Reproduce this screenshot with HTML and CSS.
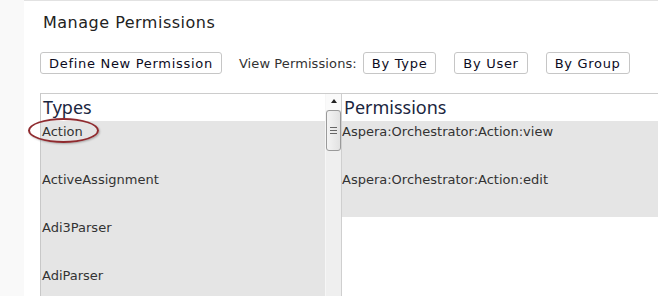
FILE: index.html
```html
<!DOCTYPE html>
<html lang="en">
<head>
  <meta charset="UTF-8">
  <title>Manage Permissions</title>
  <link rel="stylesheet" href="styles.css">
</head>
<body>
  <div class="page">
    <h1 class="page-title">Manage Permissions</h1>

    <div class="toolbar">
      <button class="btn">Define New Permission</button>
      <span class="toolbar-label">View Permissions:</span>
      <button class="btn">By Type</button>
      <button class="btn btn-spaced">By User</button>
      <button class="btn btn-spaced">By Group</button>
    </div>

    <div class="panel">
      <div class="col col-types">
        <div class="col-head">Types</div>
        <div class="col-list">
          <div class="row">Action</div>
          <div class="row">ActiveAssignment</div>
          <div class="row">Adi3Parser</div>
          <div class="row">AdiParser</div>
        </div>
      </div>

      <div class="scrollbar">
        <div class="scroll-up"></div>
        <div class="scroll-thumb"><span class="grip"></span></div>
      </div>

      <div class="col col-perms">
        <div class="col-head">Permissions</div>
        <div class="col-list">
          <div class="row">Aspera:Orchestrator:Action:view</div>
          <div class="row">Aspera:Orchestrator:Action:edit</div>
        </div>
      </div>

      <span class="callout"></span>
    </div>
  </div>
</body>
</html>
```

FILE: styles.css
```css
:root {
  --border: #cccccc;
  --row-bg: #e5e5e5;
  --text: #333333;
  --font: 'DejaVu Sans', Verdana, sans-serif;
}
* { box-sizing: border-box; margin: 0; padding: 0; }
html, body { height: 100%; overflow: hidden; }
body { background: #f9f9f9; font-family: var(--font); color: var(--text); }

.page {
  margin-left: 24px;
  height: 100%;
  background: #fff;
  border-top: 1px solid #e2e2e2;
  padding-left: 16px;
  display: flex;
  flex-direction: column;
}

/* Title */
.page-title {
  font-size: 16px;
  font-weight: normal;
  letter-spacing: 0.5px;
  line-height: 20px;
  color: #222;
  padding: 12px 0 0 3px;
}

/* Toolbar */
.toolbar {
  display: flex;
  align-items: center;
  margin-top: 19px;
  font-size: 13px;
}
.btn {
  font-family: var(--font);
  font-size: 13px;
  letter-spacing: 0.7px;
  color: #0c0c1e;
  background: #fff;
  border: 1px solid #c6c6c6;
  border-radius: 3px;
  height: 22px;
  padding: 0 8px;
  cursor: pointer;
}
.toolbar-label { margin: 0 6px 0 17px; color: #333; letter-spacing: 0.1px; }
.btn-spaced { margin-left: 18px; }

/* Panel */
.panel {
  display: flex;
  flex: 1;
  min-height: 0;
  position: relative;
  margin-top: 19px;
  border-top: 1px solid var(--border);
  border-left: 1px solid #c8c8c8;
}
.col { display: flex; flex-direction: column; overflow: hidden; }
.col-types { width: 284px; background: var(--row-bg); }
.col-perms { flex: 1; }
.col-head {
  flex: none;
  height: 27px;
  background: #fff;
  font-family: 'Noto Sans', sans-serif;
  font-size: 18px;
  line-height: 26px;
  color: #1b2640;
  padding-left: 2px;
}
.col-list { background: var(--row-bg); }
.row {
  height: 48px;
  font-size: 13px;
  line-height: 16px;
  padding-top: 3px;
  color: var(--text);
}
.col-types .row { padding-left: 1px; }

/* Fake scrollbar */
.scrollbar {
  width: 17px;
  background: #efefef;
  border-left: 1px solid #f6f6f6;
  border-right: 1px solid #cfcfcf;
  display: flex;
  flex-direction: column;
  align-items: center;
}
.scroll-up {
  height: 16px;
  width: 100%;
  background: #fafafa;
  position: relative;
}
.scroll-up::after {
  content: '';
  position: absolute;
  left: 5px;
  top: 5px;
  border-left: 3px solid transparent;
  border-right: 3px solid transparent;
  border-bottom: 4px solid #222;
}
.scroll-thumb {
  width: 15px;
  height: 41px;
  border: 1px solid #9a9a9a;
  border-radius: 3px;
  background: linear-gradient(to right, #f4f4f4, #e2e2e2);
  display: flex;
  align-items: center;
  justify-content: center;
}
.grip {
  width: 7px;
  height: 7px;
  border-top: 1px solid #666;
  border-bottom: 1px solid #666;
  position: relative;
}
.grip::after {
  content: '';
  position: absolute;
  left: 0;
  right: 0;
  top: 2px;
  border-top: 1px solid #666;
}

/* Annotation */
.callout {
  position: absolute;
  left: -13px;
  top: 24px;
  width: 71px;
  height: 25px;
  border: 2px solid #8f2a2e;
  border-radius: 50%;
  box-shadow: 1px 1px 2px rgba(0,0,0,0.25);
}
```
